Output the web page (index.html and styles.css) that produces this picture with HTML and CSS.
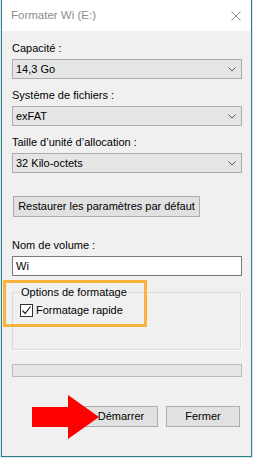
FILE: index.html
```html
<!doctype html>
<html lang="fr">
<head>
<meta charset="utf-8">
<title>Formater Wi (E:)</title>
<meta name="viewport" content="width=device-width, initial-scale=1">
<link rel="stylesheet" href="styles.css">
</head>
<body>

<div class="win">
  <!-- barre de titre -->
  <div class="titlebar">
    <span class="title">Formater Wi (E:)</span>
    <svg class="close" width="10" height="10" viewBox="0 0 10 10"><path d="M0.5 0.5 L9.5 9.5 M9.5 0.5 L0.5 9.5" stroke="#8a8a8a" stroke-width="1" fill="none"/></svg>
  </div>

  <div class="content">
    <div class="field">
      <label class="lbl">Capacité :</label>
      <div class="combo"><span>14,3 Go</span><svg width="8" height="5" viewBox="0 0 8 5"><path d="M0.5 0.5 L4 4 L7.5 0.5" stroke="#555" fill="none"/></svg></div>
    </div>
    <div class="field">
      <label class="lbl">Système de fichiers :</label>
      <div class="combo"><span>exFAT</span><svg width="8" height="5" viewBox="0 0 8 5"><path d="M0.5 0.5 L4 4 L7.5 0.5" stroke="#555" fill="none"/></svg></div>
    </div>
    <div class="field">
      <label class="lbl">Taille d’unité d’allocation :</label>
      <div class="combo"><span>32 Kilo-octets</span><svg width="8" height="5" viewBox="0 0 8 5"><path d="M0.5 0.5 L4 4 L7.5 0.5" stroke="#555" fill="none"/></svg></div>
    </div>

    <button class="btn btn-reset">Restaurer les paramètres par défaut</button>

    <div class="field field-name">
      <label class="lbl">Nom de volume :</label>
      <div class="textbox">Wi</div>
    </div>

    <fieldset class="group">
      <legend>Options de formatage</legend>
      <label class="check">
        <span class="box"><svg width="11" height="11" viewBox="0 0 11 11"><path d="M1.5 5.5 L4.2 8.5 L9.5 1.5" stroke="#222" stroke-width="1.2" fill="none"/></svg></span>
        Formatage rapide
      </label>
    </fieldset>

    <div class="progress"></div>

    <div class="actions">
      <button class="btn">Démarrer</button>
      <button class="btn">Fermer</button>
    </div>
  </div>

  <!-- annotations par-dessus la capture -->
  <div class="highlight"></div>
  <svg class="arrow" width="67" height="44" viewBox="0 0 67 44"><polygon points="0,12 36,12 36,0 67,22 36,44 36,32 0,32" fill="#ff0000"/></svg>
</div>

</body>
</html>
```

FILE: styles.css
```css
:root{
  --c-bg:#f0f0f0;
  --c-frame:#2f7f8b;
  --c-ctrl:#e5e5e5;
  --c-ctrl-border:#adadad;
  --c-mark:#f8b43c;
}
*{box-sizing:border-box;margin:0;padding:0;}
html{background:#d9e8ea;}
body{font-family:"Liberation Sans",Arial,sans-serif;font-size:11px;color:#000;line-height:15px;}

.win{
  position:relative;
  width:251px;height:457px;
  margin-left:1px;
  background:var(--c-bg);
  border:1px solid var(--c-frame);
  border-top:0;
}

.titlebar{height:31px;background:#fff;display:flex;align-items:center;justify-content:space-between;padding:0 10px 0 9px;}
.title{color:#8c8c8c;font-size:11.5px;}
.close{margin-top:1px;}

.content{padding:10px 9px 0 10px;}

.field{margin-bottom:9px;}
.lbl{display:block;margin-bottom:3px;}
.combo{
  height:20px;
  background:var(--c-ctrl);
  border:1px solid var(--c-ctrl-border);
  display:flex;align-items:center;justify-content:space-between;
  padding:0 5px 0 3px;
}

.btn{
  font:inherit;color:#000;
  background:#e1e1e1;
  border:1px solid var(--c-ctrl-border);
  height:21px;
  white-space:nowrap;
}
.btn-reset{display:block;margin:23px 0 21px 1px;width:187px;padding:0 3px;}

.field-name{margin-bottom:0;}
.textbox{height:20px;background:#fff;border:1px solid #7a7a7a;padding:2px 3px;}

.group{
  margin-top:9px;
  border:1px solid #dadada;
  box-shadow:1px 1px 0 #fff;
  padding:3px 7px 31px 7px;
  width:229px;
}
.group legend{padding:0 1px;}
.check{display:flex;align-items:center;gap:3px;}
.box{width:13px;height:13px;border:1px solid #333;background:#fff;display:flex;align-items:center;justify-content:center;}

.progress{margin-top:14px;height:13px;background:#e6e6e6;border:1px solid #bcbcbc;}

.actions{display:flex;justify-content:flex-end;gap:8px;margin:29px 2px 0 0;}
.actions .btn{width:74px;}

.highlight{position:absolute;left:1px;top:280px;width:144px;height:47px;border:3px solid var(--c-mark);}
.arrow{position:absolute;left:30px;top:395px;}
```
